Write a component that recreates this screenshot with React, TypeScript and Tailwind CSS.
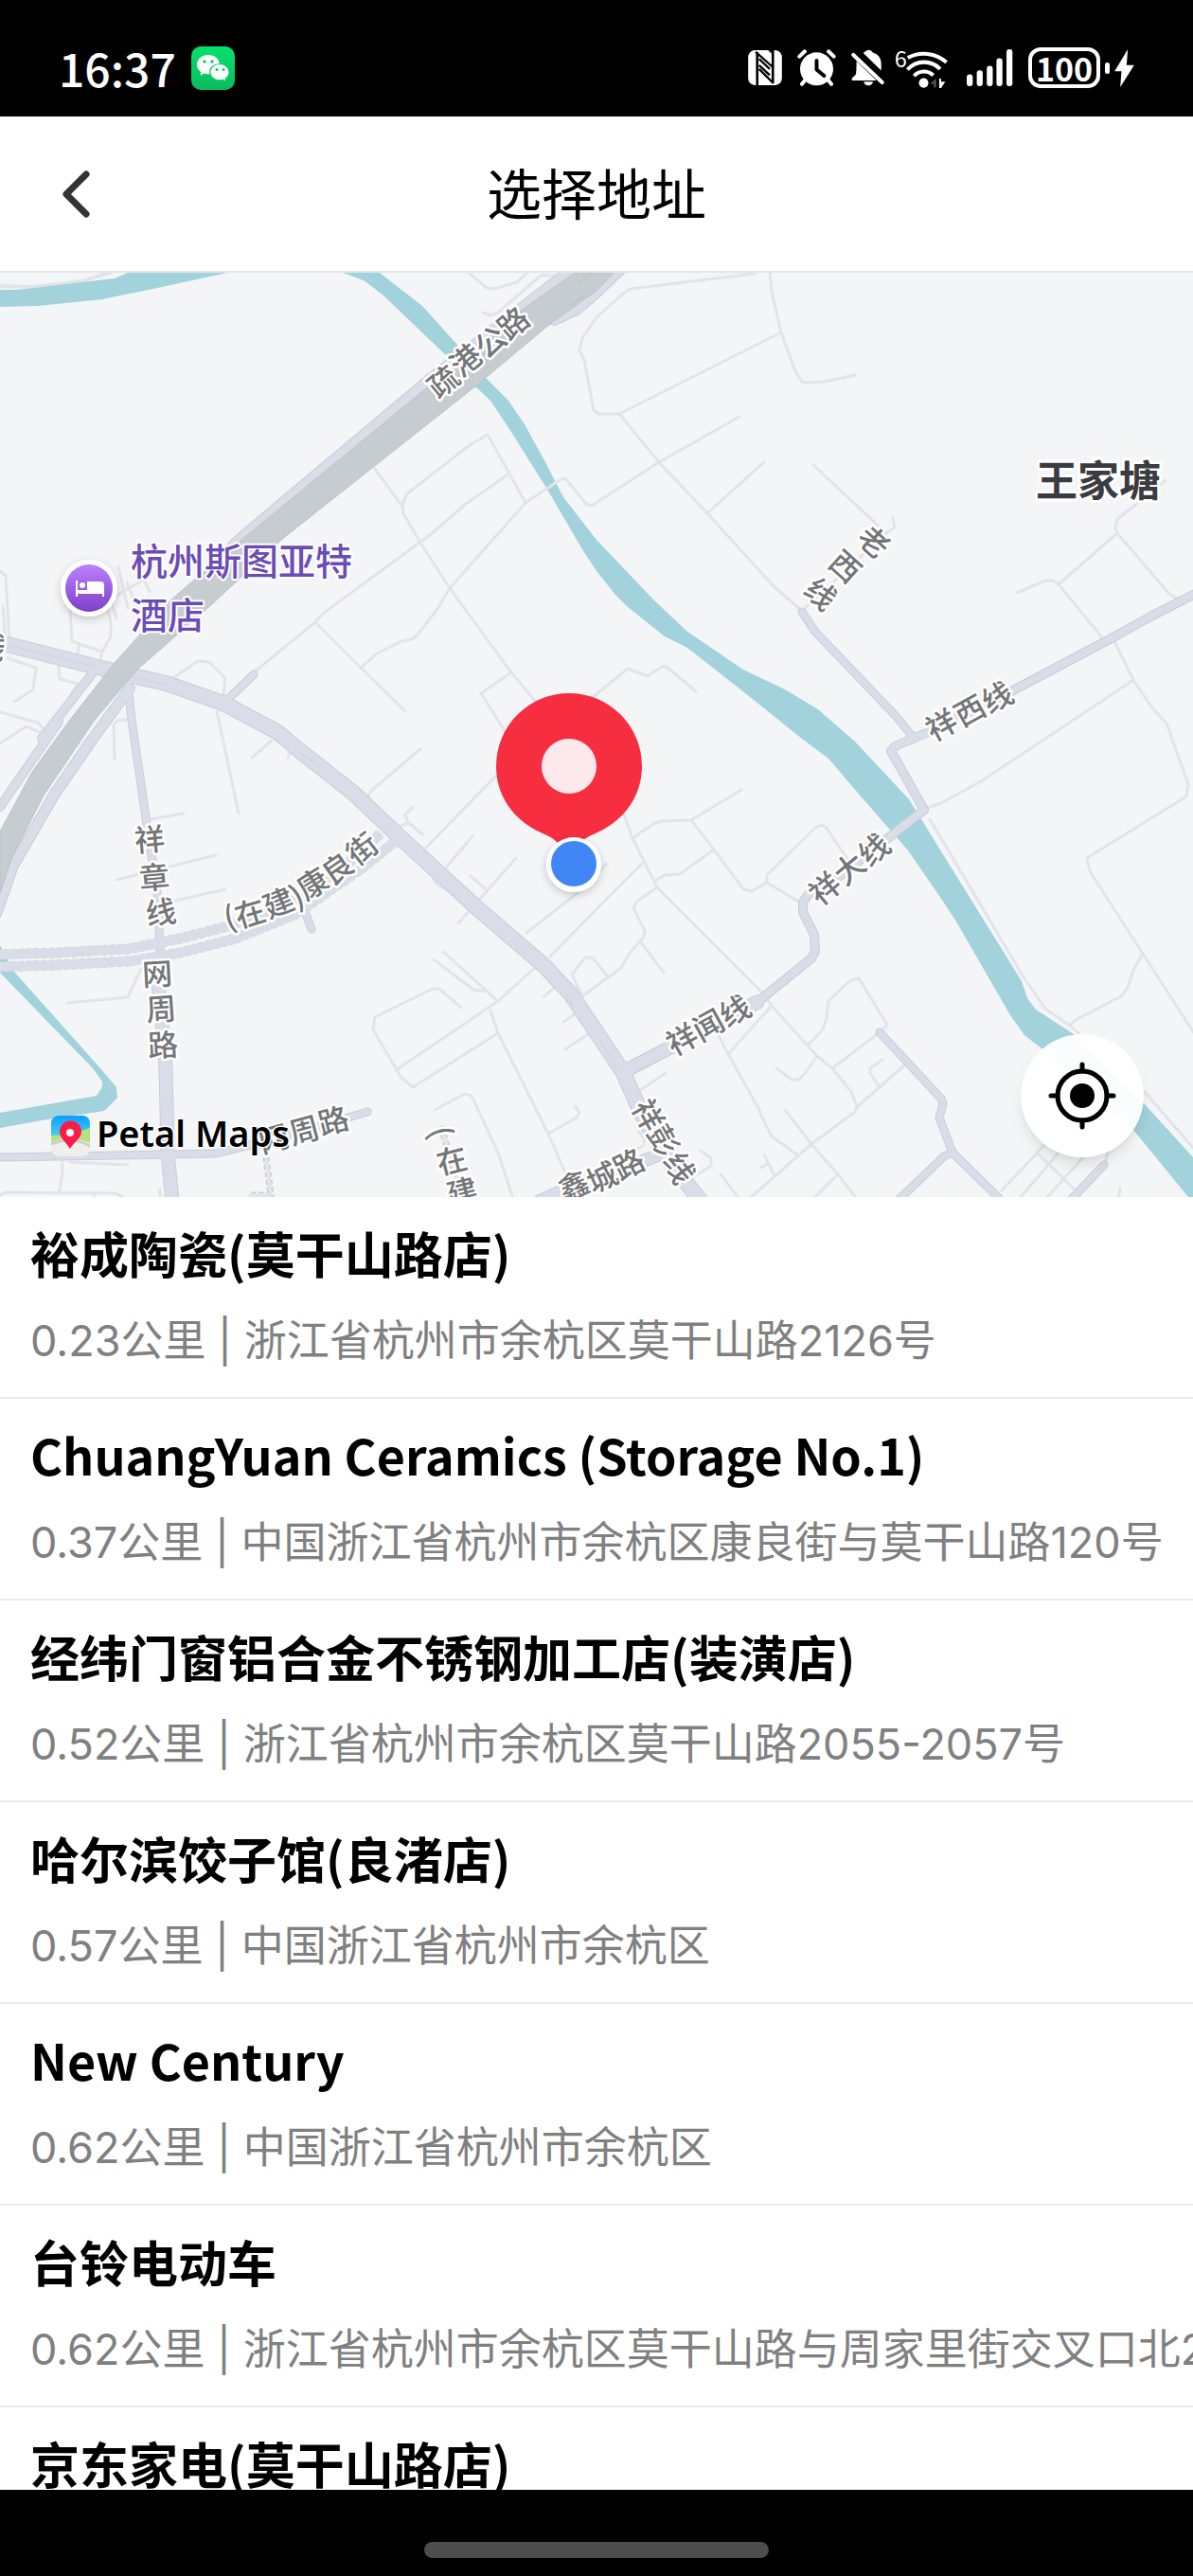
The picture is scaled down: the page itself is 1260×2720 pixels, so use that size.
import { clsx } from "clsx";

type Label = { text: string; at: [number, number][]; rotate: number[]; size?: number };

const minorRoads = [
  "M394 492 425 535 426 542 444 573 475 621 540 710 565 740 600 800",
  "M425 535 429 522 496 470 515 459 538 500 555 531 475 621 462 643 441 670 435 675 424 677 398 690 381 705",
  "M538 500 492 532 454 565 342 647 333 657 268 710",
  "M333 657 381 705 428 751",
  "M555 531 591 507 597 505 619 532 625 534 696 488 781 440",
  "M496 289 514 304 522 305 546 298 556 289",
  "M510 330 518 333 526 330 571 291 587 291",
  "M797 289 666 305 658 310 630 335 615 357 612 370 617 380 627 433 632 437 654 437 825 351",
  "M813 285 815 308 825 351 840 392 847 403 852 404 871 403 903 396",
  "M654 437 696 488 747 542 817 619 847 645",
  "M747 542 807 488",
  "M859 491 936 563 945 557 943 547",
  "M936 563 847 645",
  "M1231 507 1203 530 1180 548 1178 558 1180 563 1118 617 1112 613 1104 613 1074 626",
  "M1180 563 1235 627 1243 632",
  "M1118 617 1164 673",
  "M1177 677 1197 718 1215 745 1233 765 1237 778 1255 828 1253 841 1148 906 1151 920 1207 1007 1262 1092",
  "M1197 718 1104 780 1036 825 994 848 980 853",
  "M625 737 663 706 684 714 699 704 704 704 735 730",
  "M982 865 1080 1030 1104 1065 1130 1083 1209 1153 1262 1214",
  "M1207 1007 1198 1022 1191 1043 1184 1052 1136 1077 1130 1083",
  "M655 850 660 863 668 885 694 937 807 1050 815 1062 863 1115 879 1128 899 1153 905 1168 903 1174 857 1208 791 1266",
  "M668 885 690 870 698 867 730 866 783 834",
  "M730 866 754 897 785 939 794 941 810 932 810 924 861 874 868 871 872 873 895 907",
  "M810 932 845 953",
  "M754 897 718 923 702 924 692 930",
  "M694 937 672 952 669 959 681 983 680 989 666 1005 656 1022 630 1041 615 1052 604 1029 618 1011 626 1011 641 1030",
  "M677 995 701 1027",
  "M581 1010 630 960 678 912",
  "M556 985 611 942 641 912",
  "M815 1062 769 1113 755 1086",
  "M769 1113 802 1172 804 1178 815 1200 843 1220",
  "M855 1102 869 1087 873 1075 875 1057 897 1036 907 1033 937 1082 929 1090 879 1128",
  "M820 1128 836 1140 843 1140 849 1135 863 1115",
  "M932 1119 919 1128 919 1133 929 1148",
  "M955 1125 905 1169",
  "M829 1172 857 1208 885 1240 905 1266",
  "M885 1240 859 1266",
  "M675 1152 703 1133",
  "M761 1240 781 1266",
  "M807 1219 818 1241M803 1233 812 1229",
  "M740 1215 751 1223 751 1231 732 1243",
  "M674 1194 681 1204 679 1210 670 1214M608 1168 612 1176",
  "M1104 1208 1058 1257M1118 1217 1078 1264M1144 1222 1106 1264M1096 1218 1136 1257",
  "M1170 1217 1166 1230M1183 1255 1181 1266",
  "M181 717 209 698 221 699 238 716 235 742 229 753 231 760 252 859",
  "M121 802 120 765 125 760 133 760",
  "M159 865 194 859M123 929 228 903M185 951 238 939",
  "M71 1059 135 1053 149 1023",
  "M287 782 266 800M308 790 304 800",
  "M444 791 392 835 388 843",
  "M530 813 450 895",
  "M436 852 428 860 430 867 446 881M418 874 431 869",
  "M499 883 472 915M545 906 484 975M497 925 512 938",
  "M456 923 460 933 478 943 486 941",
  "M468 1005 526 1057 567 1020",
  "M458 1013 496 1042 502 1046 512 1046",
  "M487 1064 464 1044 457 1044 396 1074 394 1087 424 1138 436 1148 526 1091",
  "M526 1057 418 1130",
  "M518 1067 526 1091 579 1197 599 1243",
  "M579 1197 609 1180 612 1175 607 1168",
  "M459 1172 491 1155 498 1157 526 1217 542 1266",
  "M574 1053 591 1038M595 1079 611 1068M597 1108 621 1092",
  "M66 1225 66 1240 62 1260M74 1227 135 1230M0 1262 5 1259 122 1260 130 1264M100 1260V1266M169 1256V1266",
  "M0 603 6 608 10 677M3 640 6 678",
  "M74 640 76 677 84 680 108 688 117 672 117 657 113 640",
  "M84 680 81 695M108 688 105 700",
  "M112 635 152 612 158 625M125 598 135 642M134 615 140 630M116 630 123 653",
  "M8 695 38 705 35 728 15 741",
  "M0 752 40 763 46 770M0 785 28 767 46 775",
  "M62 703 63 717 82 722 76 732",
  "M540 710 508 732 535 775",
];

const roads: { d: string; width: number }[] = [
  { d: "M62 762 0 852M96 713 44 780", width: 10 },
  { d: "M137 727 98 780 58 838 14 914-4 965", width: 12 },
  { d: "M246 576 264 560 452 402 604 284", width: 12 },
  { d: "M585 338 609 327 630 309 655 285", width: 12 },
  { d: "M237 742 268 712", width: 9 },
  { d: "M135 722 139 760 155 870 167 950 169 1007", width: 9 },
  { d: "M165 1020 170 1065 175 1127 177 1217 182 1268", width: 15 },
  { d: "M321 960 329 981", width: 9 },
  { d: "M-4 1222 180 1219 227 1218 281 1205 388 1174", width: 9 },
  { d: "M570 1268 595 1257 664 1232 702 1217", width: 14 },
  { d: "M658 1132 706 1107 800 1058", width: 15 },
  {
    d: "M800 1058 857 1012 861 1004 860 987 848 963 848 953 853 945 887 925 976 855 941 793 945 788 964 780 985 771 1068 730 1172 675 1217 650 1264 626",
    width: 10,
  },
  { d: "M847 646 861 667 947 757 964 778", width: 9 },
  { d: "M929 1090 994 1160 996 1166 992 1180 1006 1217 1058 1268", width: 9 },
  { d: "M1006 1217 997 1221 948 1268", width: 9 },
  { d: "M1166 1230 1130 1268", width: 9 },
  {
    d: "M6 680 113 707 177 722 237 743 293 773 317 793 374 838 418 880 502 957 575 1020 603 1050 630 1090 658 1132 678 1177 702 1220 740 1268",
    width: 17,
  },
];

const plannedRoads = [
  "M-4 1008 60 1006 135 1002 190 991 241 978 313 950 362 917 402 880",
  "M-4 1021 60 1019 137 1015 190 1006 249 991 313 965 382 917 418 888",
];

const roadLabels: Label[] = [
  { text: "疏港公路", at: [[468, 403], [492, 380], [518, 361], [542, 341]], rotate: [-40, -40, -40, -40] },
  { text: "老西线", at: [[923, 572], [893, 598], [867, 627]], rotate: [42, 42, 42] },
  { text: "祥西线", at: [[994, 765], [1024, 750], [1053, 736]], rotate: [-29, -29, -29] },
  { text: "祥大线", at: [[871, 938], [897, 917], [923, 897]], rotate: [-40, -40, -40] },
  { text: "祥闻线", at: [[720, 1097], [748, 1082], [776, 1067]], rotate: [-29, -29, -29] },
  { text: "祥彭线", at: [[685, 1177], [701, 1204], [718, 1233]], rotate: [61, 61, 61] },
  {
    text: "(在建)康良街",
    at: [[242, 968], [264, 964], [294, 953], [313, 946], [330, 933], [356, 917], [382, 896]],
    rotate: [-15, -17, -22, -26, -32, -35, -38],
  },
  { text: "祥章线", at: [[158, 886], [163, 926], [170, 963]], rotate: [-5, -5, -8] },
  { text: "网周路", at: [[166, 1028], [170, 1065], [172, 1103]], rotate: [-3, -4, -3] },
  { text: "网周路", at: [[289, 1202], [321, 1193], [352, 1183]], rotate: [-15, -15, -15] },
  { text: "(在建", at: [[466, 1195], [477, 1225], [488, 1258]], rotate: [75, -14, -14] },
  { text: "鑫城路", at: [[606, 1252], [636, 1243], [664, 1229]], rotate: [-25, -25, -27] },
  { text: "线", at: [[-10, 682]], rotate: [10] },
];

const places = [
  { name: "裕成陶瓷(莫干山路店)", distance: "0.23公里", address: "浙江省杭州市余杭区莫干山路2126号" },
  { name: "ChuangYuan Ceramics (Storage No.1)", distance: "0.37公里", address: "中国浙江省杭州市余杭区康良街与莫干山路120号" },
  { name: "经纬门窗铝合金不锈钢加工店(装潢店)", distance: "0.52公里", address: "浙江省杭州市余杭区莫干山路2055-2057号" },
  { name: "哈尔滨饺子馆(良渚店)", distance: "0.57公里", address: "中国浙江省杭州市余杭区" },
  { name: "New Century", distance: "0.62公里", address: "中国浙江省杭州市余杭区" },
  { name: "台铃电动车", distance: "0.62公里", address: "浙江省杭州市余杭区莫干山路与周家里街交叉口北2" },
  { name: "京东家电(莫干山路店)", distance: "", address: "" },
];

// Each glyph is centred on its own point of the road, then turned to follow it.
function RoadLabel({ text, at, rotate, size = 32 }: Label) {
  const origins = at.map(([cx, cy], i) => {
    const a = (rotate[i] * Math.PI) / 180;
    const dx = /[()]/.test(text[i]) ? -size * 0.17 : -size / 2;
    const dy = size * 0.38;
    return [cx + dx * Math.cos(a) - dy * Math.sin(a), cy + dx * Math.sin(a) + dy * Math.cos(a)];
  });
  return (
    <text
      x={origins.map((o) => o[0].toFixed(1)).join(" ")}
      y={origins.map((o) => o[1].toFixed(1)).join(" ")}
      rotate={rotate.join(" ")}
      fontSize={size}
      fill="#737578"
      stroke="#fff"
      strokeWidth="5"
      strokeLinejoin="round"
      paintOrder="stroke"
      fontWeight="500"
    >
      {text}
    </text>
  );
}

function WeChatIcon() {
  return (
    <svg viewBox="0 0 46 46" className="size-[46px]" aria-hidden="true">
      <defs>
        <linearGradient id="wechat" x1="0" y1="0" x2="0" y2="1">
          <stop offset="0" stopColor="#05e26d" />
          <stop offset="1" stopColor="#0abb5d" />
        </linearGradient>
      </defs>
      <rect width="46" height="46" rx="10" fill="url(#wechat)" />
      <path d="M18 9c-6.700 0-12 4.500-12 10.300 0 3.200 1.700 6 4.400 7.900l-.9 3.500 4-2.100c1.400.4 2.900.7 4.500.7 6.700 0 12-4.400 12-10S24.700 9 18 9Z" fill="#fff" />
      <path d="M30 18.500c-5.600 0-10.300 3.800-10.300 8.700s4.700 8.700 10.300 8.700c1.200 0 2.500-.2 3.600-.5l3.400 1.800-.8-3c2.300-1.600 4-4.100 4-7 0-4.900-4.600-8.700-10.200-8.700Z" fill="#fff" stroke="#07cc64" strokeWidth="1.200" />
      <g fill="#07cc64">
        <circle cx="14" cy="16" r="1.700" />
        <circle cx="22" cy="16" r="1.700" />
        <circle cx="27" cy="24.500" r="1.500" />
        <circle cx="34" cy="24.500" r="1.500" />
      </g>
    </svg>
  );
}

function NfcIcon() {
  return (
    <svg viewBox="0 0 108 112" className="h-[37px] w-9" aria-hidden="true">
      <rect width="108" height="112" rx="22" fill="#fff" />
      <g fill="none" stroke="#000" strokeWidth="8">
        <path d="M29 6v106" />
        <path d="M79 0v104" />
        <path d="M24 6l57 50M35 28l34 32M35 48l34 32M35 60l46 46" strokeWidth="7" />
      </g>
      <path d="M64 0h16l-6 3v8Z" fill="#000" />
    </svg>
  );
}

function AlarmIcon() {
  return (
    <svg viewBox="0 0 124 118" className="h-[39px] w-[41px]" aria-hidden="true">
      <circle cx="62" cy="63" r="53" fill="#fff" />
      <g fill="none" stroke="#fff" strokeWidth="12" strokeLinecap="round">
        <path d="M7 23 24 7M100 7l17 16M24 100l-9 11M100 100l9 11" />
      </g>
      <path d="M62 36v29l24 20" fill="none" stroke="#000" strokeWidth="12" strokeLinecap="round" strokeLinejoin="round" />
    </svg>
  );
}

function MutedBellIcon() {
  return (
    <svg viewBox="0 0 104 118" className="h-[39px] w-[35px]" aria-hidden="true">
      <path d="M37 11c6 0 9-9 18-9s12 9 18 11c17 6 22 20 22 35v20Z" fill="#fff" />
      <path d="M16 38l64 62H4c-4 0-4-8 0-10l9-8c3-3 3-30 3-44Z" fill="#fff" />
      <path d="M6 18l92 88" stroke="#fff" strokeWidth="12" strokeLinecap="round" />
      <path d="M39 104h30c-3 16-27 16-30 0Z" fill="#fff" />
    </svg>
  );
}

function WifiIcon() {
  return (
    <svg viewBox="0 0 164 128" className="h-[43px] w-[55px]" aria-hidden="true">
      <text x="-4" y="62" fontSize="70" fill="#fff">
        6
      </text>
      <g fill="none" stroke="#fff" strokeWidth="12">
        <path d="M38 33c38-22 88-16 122 14" />
        <path d="M37 70c28-31 75-31 103-2" />
        <path d="M58 90c16-18 44-18 60-2" />
      </g>
      <circle cx="88" cy="112" r="15" fill="#fff" />
      <path d="M127 98v28h-7v-11h-12Z" fill="#555" />
      <path d="M137 98h6v10h13l-13 20h-6Z" fill="#fff" />
    </svg>
  );
}

function SignalIcon() {
  return (
    <svg viewBox="0 0 148 118" className="h-[39px] w-[49px]" fill="#fff" aria-hidden="true">
      <rect y="80" width="19" height="38" rx="9" />
      <rect x="32" y="67" width="19" height="51" rx="9" />
      <rect x="64" y="53" width="19" height="65" rx="9" />
      <rect x="95" y="29" width="19" height="89" rx="9" />
      <rect x="127" width="19" height="118" rx="9" />
    </svg>
  );
}

function StatusBar() {
  return (
    <div className="flex shrink-0 items-center justify-between bg-black px-[62px] pt-10 pb-5 text-white">
      <div className="flex items-center gap-4">
        <span className="text-5xl leading-[63px] font-medium">16:37</span>
        <WeChatIcon />
      </div>
      <div className="flex items-center">
        <div className="flex items-center gap-4">
          <NfcIcon />
          <AlarmIcon />
          <MutedBellIcon />
        </div>
        <div className="ml-3 flex items-center gap-5">
          <WifiIcon />
          <SignalIcon />
        </div>
        <div className="ml-4 flex items-center gap-[5px]">
          <span className="flex h-[43px] w-[76px] items-center justify-center rounded-[13px] border-4 border-white text-[34px] leading-none font-bold">
            100
          </span>
          <span className="h-3 w-[5px] rounded-full bg-white" />
          <svg viewBox="0 0 62 120" className="h-10 w-[21px]" aria-hidden="true">
            <path d="M42 0 0 70h22L18 120 62 50H38Z" fill="#fff" />
          </svg>
        </div>
      </div>
    </div>
  );
}

function Header() {
  return (
    <header className="grid shrink-0 grid-cols-[1fr_auto_1fr] items-center border-b-2 border-[#e4e5e7] bg-white px-10">
      <button type="button" aria-label="返回" className="flex size-20 items-center justify-center justify-self-start">
        <svg viewBox="0 0 30 50" className="h-[50px] w-[30px]" fill="none" stroke="#333" strokeWidth="7" strokeLinecap="round" strokeLinejoin="round">
          <path d="M26 4 5 25l21 21" />
        </svg>
      </button>
      <h1 className="pt-[34px] pb-[38px] text-[58px] leading-[91px] text-black">选择地址</h1>
    </header>
  );
}

function MapCanvas() {
  return (
    <svg viewBox="0 288 1260 976" className="block w-full" role="img" aria-label="地图">
      <defs>
        <linearGradient id="hotel" x1="0" y1="0" x2="0" y2="1">
          <stop offset="0" stopColor="#bd80fb" />
          <stop offset="1" stopColor="#7d40c8" />
        </linearGradient>
        <filter id="soft" x="-30%" y="-30%" width="160%" height="160%">
          <feDropShadow dx="0" dy="3" stdDeviation="4" floodOpacity="0.2" />
        </filter>
        <clipPath id="petal">
          <rect x="54" y="1178" width="41" height="43" rx="8" />
        </clipPath>
        <linearGradient id="petalSky" x1="0" y1="0" x2="0" y2="1">
          <stop offset="0" stopColor="#0a9dff" />
          <stop offset="1" stopColor="#4fd3f7" />
        </linearGradient>
      </defs>
      <rect y="288" width="1260" height="976" fill="#f3f5f7" />

      <path d="M0 302 36 303 86 297 118 287" fill="none" stroke="#e2e4e9" strokeWidth="4" />
      <g fill="#a2d2db">
        <path d="M0 306 18 306 121 294 135 288H240L171 303 108 316 40 323 0 324Z" />
        <path d="M362 288 384 296 404 311 474 378 502 408 518 423 538 453 577 515 615 580 630 603 650 628 662 640 702 672 726 684 791 735 847 780 875 801 911 843 939 875 959 898 988 940 1010 973 1067 1072 1082 1093 1100 1107 1197 1193 1255 1264H1260V1222L1209 1166 1134 1092 1094 1066 1085 1054 1079 1036 968 857 960 844 903 783 864 749 829 728 785 707 726 667 690 633 630 570 595 525 577 490 554 448 537 423 512 398 482 363 446 323 401 288Z" />
        <path d="M0 998 14 1025 106 1128 123 1148 124 1159 110 1173 44 1183 0 1191V1175L102 1157 108 1148 108 1142 98 1128 0 1027Z" />
      </g>

      <g fill="none" stroke="#e2e4e9" strokeWidth="3" strokeLinecap="round" strokeLinejoin="round">
        {minorRoads.map((d) => (
          <path key={d} d={d} />
        ))}
      </g>

      <g fill="none" strokeLinecap="round" strokeLinejoin="round">
        {roads.map(({ d, width }) => (
          <path key={d} d={d} stroke="#c8cdd7" strokeWidth={width} />
        ))}
        {plannedRoads.map((d) => (
          <g key={d} strokeLinecap="butt">
            <path d={d} stroke="#cdd0d6" strokeWidth="11" strokeDasharray="5 3" />
            <path d={d} stroke="#d9dde7" strokeWidth="10" />
          </g>
        ))}
        {roads.map(({ d, width }) => (
          <path key={d} d={d} stroke="#d9dde7" strokeWidth={width - 2} />
        ))}
        <path d="M12 682 100 704M138 714 178 724M318 795 340 812M404 868 412 876M540 993 556 1008M598 1050 606 1064M634 1098 652 1130M674 1130 694 1120" stroke="#cdd2dc" strokeWidth="1" />
        <path d="M281 1222 286 1262H264M466 1190 482 1245" stroke="#c9cbd0" strokeWidth="7" strokeDasharray="5 3" strokeLinecap="butt" />
        <path d="M281 1222 286 1262H264M466 1190 482 1245" stroke="#e3e4e8" strokeWidth="4" />
      </g>

      <path
        d="M607 288 550 328 454 407 249 575 181 633 121 700 74 760 34 815 0 878V943L12 907 46 840 100 760 145 707 225 637 297 570 502 408 581 342 630 307 648 288Z"
        fill="#c6cdd0"
        stroke="#bcc2c7"
        strokeWidth="1"
      />
      <path d="M609 300 626 287M602 323 618 312" stroke="#b9bfc5" strokeWidth="1" />

      {roadLabels.map((label) => (
        <RoadLabel key={label.text + label.at[0][0]} {...label} />
      ))}

      <g stroke="#fff" strokeWidth="6" strokeLinejoin="round" paintOrder="stroke">
        <text x="1094" y="524" fontSize="44" fontWeight="700" fill="#3b3c42">
          王家塘
        </text>
        <g fontSize="39" fill="#6b4bb6" strokeWidth="4" fontWeight="500">
          <text x="138" y="607">杭州斯图亚特</text>
          <text x="138" y="664">酒店</text>
        </g>
      </g>

      <g>
        <circle cx="94" cy="621" r="30" fill="#fff" filter="url(#soft)" />
        <circle cx="94" cy="621" r="25" fill="url(#hotel)" />
        <path d="M80 613v17h2v-3h26v3h2v-12q0-4-4-4H92v9H82v-10Z" fill="#fff" />
        <circle cx="87" cy="618" r="3" fill="#fff" />
      </g>

      <g>
        <path d="M601 732a77 77 0 0 1 77 77c0 31-18 56-45 69-11 5-14 6-20 12l-12 12-12-12c-6-6-9-7-20-12-27-13-45-38-45-69a77 77 0 0 1 77-77Z" fill="#f72e40" />
        <circle cx="601" cy="809" r="29" fill="#fde9eb" />
        <circle cx="606" cy="913" r="29" fill="#fff" filter="url(#soft)" />
        <circle cx="606" cy="912" r="24" fill="#4285f4" />
      </g>

      <g clipPath="url(#petal)">
        <rect x="54" y="1178" width="41" height="43" fill="#efeeea" />
        <path d="M54 1178H95V1193L54 1201Z" fill="url(#petalSky)" />
        <path d="M54 1199 74 1198 95 1191V1207Q76 1198 54 1206Z" fill="#b4e37c" />
        <path d="M54 1208Q76 1199 95 1210" fill="none" stroke="#cfcfcf" strokeWidth="3" />
        <path d="M74 1213C70 1206 63 1202 63 1195a11 11 0 0 1 23 0c0 7-8 11-12 18Z" fill="#fb1d47" />
        <circle cx="74" cy="1196" r="4" fill="#fff" />
      </g>
      <text x="102" y="1211" fontSize="38" fontWeight="600" fill="#000" stroke="#fff" strokeWidth="3" paintOrder="stroke" fontFamily="'Noto Sans', sans-serif">
        Petal Maps
      </text>
    </svg>
  );
}

function LocateButton() {
  return (
    <button
      type="button"
      aria-label="定位"
      className="absolute right-[52px] bottom-[42px] flex size-[130px] items-center justify-center rounded-full bg-white/95 shadow-lg shadow-black/10"
    >
      <svg viewBox="0 0 72 72" className="size-[72px]" fill="none" stroke="#000" strokeWidth="5" strokeLinecap="round" aria-hidden="true">
        <circle cx="36" cy="36" r="26" />
        <circle cx="36" cy="36" r="13" fill="#000" stroke="none" />
        <path d="M36 3v7M36 62v7M3 36h7M62 36h7" />
      </svg>
    </button>
  );
}

export default function App() {
  return (
    <div
      lang="zh-CN"
      className="flex h-screen flex-col overflow-hidden bg-white font-['Noto_Sans_CJK_SC',sans-serif]"
    >
      <StatusBar />
      <Header />
      <section className="relative shrink-0">
        <MapCanvas />
        <LocateButton />
      </section>
      <ul className="min-h-0 flex-1 overflow-hidden">
        {places.map(({ name, distance, address }, i) => (
          <li
            key={name}
            className={clsx("px-8 pt-[22px] pb-[26px] whitespace-nowrap", i < places.length - 1 && "border-b-2 border-[#ebebeb]")}
          >
            <h2 className="text-[52px] leading-[73px] font-bold text-black">{name}</h2>
            {address && (
              <p className="mt-6 font-['Inter','Noto_Sans_CJK_SC',sans-serif] text-[45px] leading-[66px] text-[#808080]">
                {distance} | {address}
              </p>
            )}
          </li>
        ))}
      </ul>
      <footer className="flex shrink-0 justify-center bg-black pt-[55px] pb-[19px]">
        <span className="h-[17px] w-[364px] rounded-full bg-[#4d4d4d]" />
      </footer>
    </div>
  );
}
